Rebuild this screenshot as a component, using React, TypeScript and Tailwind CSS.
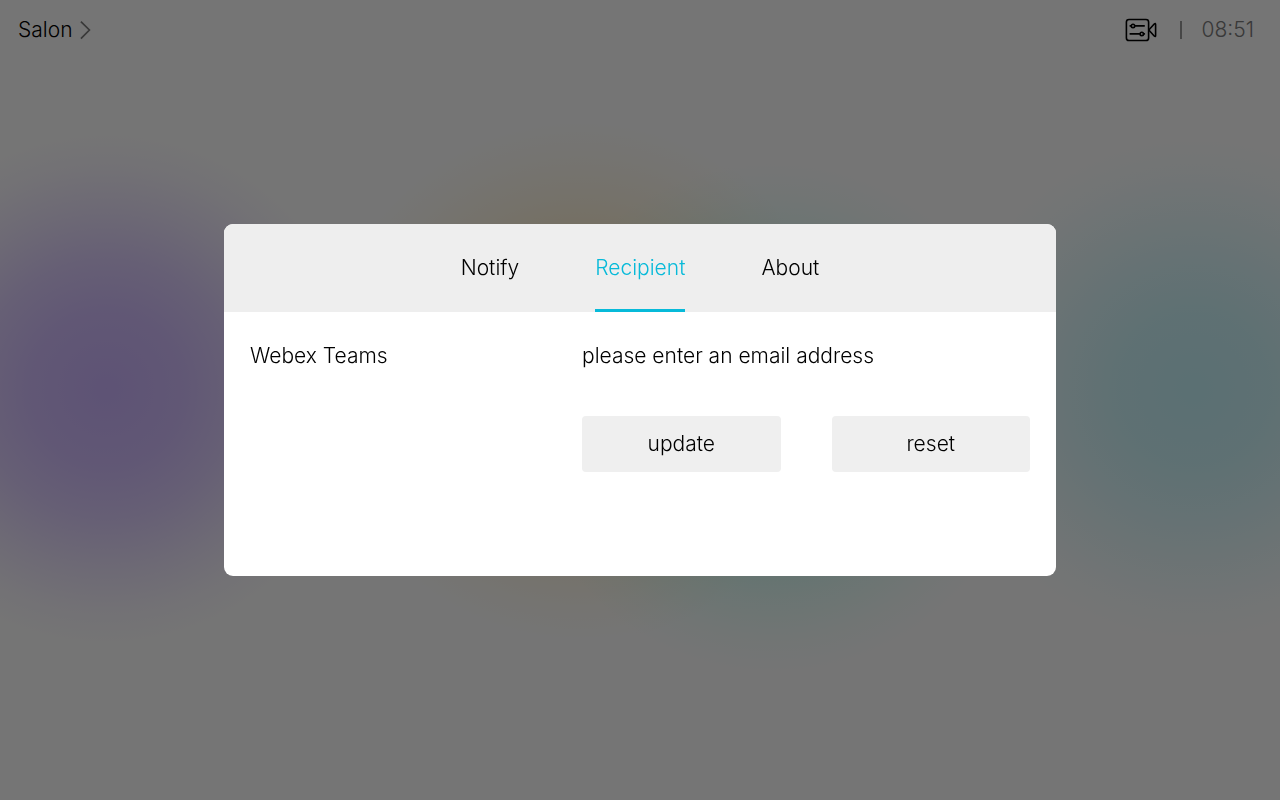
import { useState } from "react";

const tabs = ["Notify", "Recipient", "About"];

function ChevronIcon() {
  return (
    <svg viewBox="0 0 12 20" className="h-5 w-3" fill="none" stroke="#727272" strokeWidth="1.7" aria-hidden="true">
      <path d="M.9 1.7 9.4 10 .9 18.6" />
    </svg>
  );
}

function CameraControlsIcon() {
  return (
    <svg viewBox="0 0 32 24" className="h-6 w-8" fill="none" stroke="#000" strokeWidth="1.6" strokeLinecap="round" strokeLinejoin="round" aria-hidden="true">
      <rect x="1.4" y="1.5" width="22.2" height="21" rx="2.6" />
      <path d="M23.8 12 29.2 6Q30.6 4.8 30.6 6.6V17.4Q30.6 19.2 29.2 18L23.8 12" />
      <circle cx="8" cy="7.9" r="1.7" />
      <path d="M5.2 7.9h1M9.8 7.9h9.4" />
      <circle cx="16.8" cy="15.9" r="1.7" />
      <path d="M5.2 15.9h9.8M18.6 15.9h.8" />
    </svg>
  );
}

export default function App() {
  const [active, setActive] = useState("Recipient");

  return (
    <div className="min-h-screen bg-[#ebebeb] bg-[radial-gradient(circle_258px_at_8.3%_48.6%,rgba(141,97,233,0.5),rgba(141,97,233,0.43)_30%,rgba(141,97,233,0.32)_50%,rgba(141,97,233,0.17)_70%,rgba(141,97,233,0.06)_86%,rgba(141,97,233,0)),radial-gradient(circle_254px_at_93.3%_48.6%,rgba(129,213,225,0.5),rgba(129,213,225,0.43)_30%,rgba(129,213,225,0.31)_50%,rgba(129,213,225,0.17)_70%,rgba(129,213,225,0.06)_86%,rgba(129,213,225,0)),radial-gradient(circle_258px_at_60.4%_52.2%,rgba(83,225,195,0.5),rgba(83,225,195,0.43)_30%,rgba(83,225,195,0.3)_50%,rgba(83,225,195,0.14)_70%,rgba(83,225,195,0.05)_86%,rgba(83,225,195,0)),radial-gradient(circle_262px_at_45.3%_47.6%,rgba(235,180,60,0.5),rgba(235,180,60,0.42)_30%,rgba(235,180,60,0.26)_50%,rgba(235,180,60,0.13)_70%,rgba(235,180,60,0.05)_86%,rgba(235,180,60,0))] font-['Inter',sans-serif] text-[21px] leading-7 font-light text-black">
      <header className="flex h-15 items-center justify-between pr-[26px] pl-[18px]">
        <button type="button" className="flex items-center gap-[7px]">
          Salon
          <ChevronIcon />
        </button>
        <div className="flex items-center">
          <button type="button" aria-label="Camera controls">
            <CameraControlsIcon />
          </button>
          <span className="mr-5 ml-[23px] h-[18px] w-0.5 bg-[#8c8c8c]" />
          <time className="text-[#727272]">08:51</time>
        </div>
      </header>

      <div className="fixed inset-0 flex items-center justify-center bg-black/50 px-6">
        <section role="dialog" aria-label="Recipient" className="min-h-88 w-full max-w-208 overflow-hidden rounded-[9px] bg-white">
          <nav role="tablist" className="flex h-22 justify-center gap-[76px] bg-[#eeeeee]">
            {tabs.map((tab) => (
              <button
                key={tab}
                type="button"
                role="tab"
                aria-selected={tab === active}
                onClick={() => setActive(tab)}
                className={
                  tab === active
                    ? "border-b-3 border-[#07bad9] pt-[3px] text-[#07bad9]"
                    : "border-b-3 border-transparent pt-[3px]"
                }
              >
                {tab}
              </button>
            ))}
          </nav>
          <div className="grid grid-cols-[1fr_448px] px-[26px]">
            <h2 className="flex h-22 items-center">Webex Teams</h2>
            <p className="flex h-22 items-center">please enter an email address</p>
            <div className="col-start-2 flex h-22 items-center gap-[51px]">
              <button type="button" className="h-14 flex-1 rounded bg-[#efefef]">
                update
              </button>
              <button type="button" className="h-14 flex-1 rounded bg-[#efefef]">
                reset
              </button>
            </div>
          </div>
        </section>
      </div>
    </div>
  );
}
